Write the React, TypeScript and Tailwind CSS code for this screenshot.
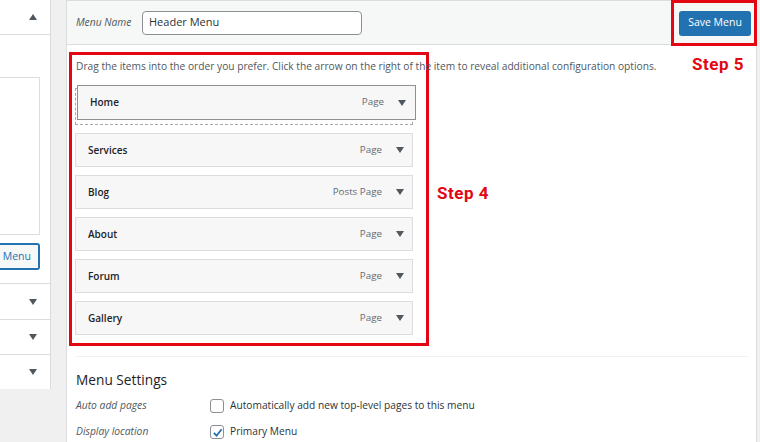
import React from "react";

const font = { fontFamily: '"Open Sans", "Noto Sans", sans-serif' };

function Caret({ up = false }: { up?: boolean }) {
  return (
    <svg width="8" height="6" viewBox="0 0 8 6" className="block">
      {up ? <path d="M0 6 L4 0 L8 6 Z" fill="#50575e" /> : <path d="M0 0 L8 0 L4 6 Z" fill="#50575e" />}
    </svg>
  );
}

function Item({ label, type }: { label: string; type: string }) {
  return (
    <div className="flex h-[34px] w-[338px] items-center border border-[#dcdcde] bg-[#f7f7f7] pl-[12px] pr-[8px]">
      <span className="text-[10px] font-semibold text-[#1d2327]">{label}</span>
      <span className="ml-auto mr-[14px] text-[9.8px] text-[#646970]">{type}</span>
      <Caret />
    </div>
  );
}

export default function App() {
  return (
    <div className="flex h-[442px] w-[760px] overflow-hidden bg-[#f0f0f1]" style={font}>
      {/* left panel */}
      <div className="flex h-[389px] w-[51px] shrink-0 flex-col border-r border-[#dcdcde] bg-white">
        <div className="flex h-[35px] shrink-0 items-center justify-end border-b border-[#dcdcde] pr-[13px]">
          <Caret up />
        </div>
        <div className="mt-[42px] h-[158px] w-[40px] border border-l-0 border-[#dcdcde]" />
        <div className="mt-[8px] flex h-[27px] w-[40px] items-center justify-end rounded-r-[3px] border-2 border-l-0 border-[#2271b1] bg-[#f6f7f7] pr-[7px] text-[10.5px] text-[#2271b1]">
          Menu
        </div>
        <div className="mt-[13px] flex h-[36px] items-center justify-end border-t border-[#dcdcde] pr-[13px]">
          <Caret />
        </div>
        <div className="flex h-[35px] items-center justify-end border-t border-[#dcdcde] pr-[13px]">
          <Caret />
        </div>
        <div className="flex h-[35px] items-center justify-end border-t border-[#dcdcde] pr-[13px]">
          <Caret />
        </div>
      </div>

      {/* main panel */}
      <div className="relative ml-[15px] flex w-[691px] shrink-0 flex-col border-x border-t border-[#dcdcde] bg-white">
        <div className="relative flex h-[44px] shrink-0 items-center border-b border-[#dcdcde] bg-[#f6f7f7] pl-[9px]">
          <span className="w-[66px] text-[10.3px] italic text-[#50575e]">Menu Name</span>
          <div className="flex h-[24px] w-[220px] items-center rounded-[4px] border border-[#8c8f94] bg-white px-[6px] text-[11px] text-[#2c3338]">
            Header Menu
          </div>
          <div className="absolute right-[-1px] top-[-1px] flex h-[46px] w-[86px] items-center justify-end border-[3px] border-[#e30613] pr-[3px]">
            <div className="flex h-[25px] w-[72px] items-center justify-center rounded-[3px] bg-[#2271b1] text-[10.5px] text-white">
              Save Menu
            </div>
          </div>
        </div>

        <div className="absolute left-[625px] top-[51px] text-[17px] font-bold tracking-[0.5px] text-[#e30613]" style={{ fontFamily: "Roboto, sans-serif" }}>
          Step 5
        </div>

        <div className="flex items-center">
          <div className="ml-[2px] mt-[7px] flex w-[360px] flex-col border-[3px] border-[#e30613] pb-[8px] pl-[3px]">
            <div className="pl-[1px] pt-[4px] text-[10.2px] whitespace-nowrap text-[#50575e]">
              Drag the items into the order you prefer. Click the arrow on the right of the item to reveal additional configuration options.
            </div>
            <div className="relative mt-[14px] h-[37px] w-[338px] border border-dashed border-[#a7aaad]">
              <div className="absolute left-[1px] top-[-4px] flex h-[35px] w-[339px] items-center border border-[#8c8f94] bg-[#f7f7f7] pl-[12px] pr-[9px]">
                <span className="text-[10px] font-semibold text-[#1d2327]">Home</span>
                <span className="ml-auto mr-[14px] text-[9.8px] text-[#646970]">Page</span>
                <Caret />
              </div>
            </div>
            <div className="mt-[8px] flex flex-col gap-[8px]">
              <Item label="Services" type="Page" />
              <Item label="Blog" type="Posts Page" />
              <Item label="About" type="Page" />
              <Item label="Forum" type="Page" />
              <Item label="Gallery" type="Page" />
            </div>
          </div>
          <div className="ml-[8px] mt-[-4px] text-[17px] font-bold tracking-[0.5px] text-[#e30613]" style={{ fontFamily: "Roboto, sans-serif" }}>
            Step 4
          </div>
        </div>

        <div className="mx-[9px] mt-[10px] border-t border-[#f0f0f1]" />
        <div className="pl-[9px] pt-[13px] text-[13.7px] text-[#1d2327]">Menu Settings</div>
        <div className="mt-[7px] flex items-center pl-[9px]">
          <span className="w-[134px] text-[10.3px] italic text-[#50575e]">Auto add pages</span>
          <span className="h-[14px] w-[14px] rounded-[3px] border border-[#8c8f94] bg-white" />
          <span className="ml-[6px] text-[10.2px] text-[#2c3338]">Automatically add new top-level pages to this menu</span>
        </div>
        <div className="mt-[11px] flex items-center pl-[9px]">
          <span className="w-[134px] text-[10.3px] italic text-[#50575e]">Display location</span>
          <span className="flex h-[14px] w-[14px] items-center justify-center rounded-[3px] border border-[#8c8f94] bg-white">
            <svg width="11" height="11" viewBox="0 0 12 12">
              <path d="M2 6.5 L5 9.5 L10.5 2.5" stroke="#2271b1" strokeWidth="2" fill="none" />
            </svg>
          </span>
          <span className="ml-[6px] text-[10.2px] text-[#2c3338]">Primary Menu</span>
        </div>
      </div>
    </div>
  );
}
